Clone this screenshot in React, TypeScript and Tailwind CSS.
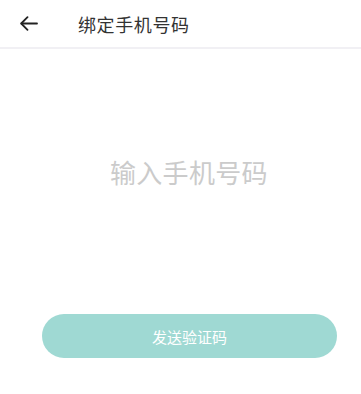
import React from "react";

export default function App() {
  return (
    <div
      className="w-[361px] h-[394px] bg-white flex flex-col"
      style={{ fontFamily: '"Noto Sans CJK SC", "Noto Sans", sans-serif' }}
    >
      <div className="h-[49px] flex items-center border-b-[2px] border-[#f1f0f4]">
        <div className="w-[78px] pl-[20px] flex items-center">
          <svg width="18" height="15" viewBox="0 0 18 15" fill="none" stroke="#222" strokeWidth="1.8" strokeLinecap="round" strokeLinejoin="round">
            <path d="M17 7.5H1.5" />
            <path d="M7.5 1.2L1.2 7.5l6.3 6.3" />
          </svg>
        </div>
        <span className="text-[18px] leading-none text-[#333] tracking-[0.6px]">绑定手机号码</span>
      </div>
      <div className="h-[98px]" />
      <div className="h-[50px] flex items-center pl-[110px]">
        <span className="text-[26px] leading-none text-[#cbcbcb] tracking-[0.3px]">输入手机号码</span>
      </div>
      <div className="h-[117px]" />
      <div className="pl-[42px]">
        <button className="w-[295px] h-[44px] rounded-full bg-[#9fd9d3] text-white text-[15px] leading-none flex items-center justify-center">
          发送验证码
        </button>
      </div>
    </div>
  );
}
